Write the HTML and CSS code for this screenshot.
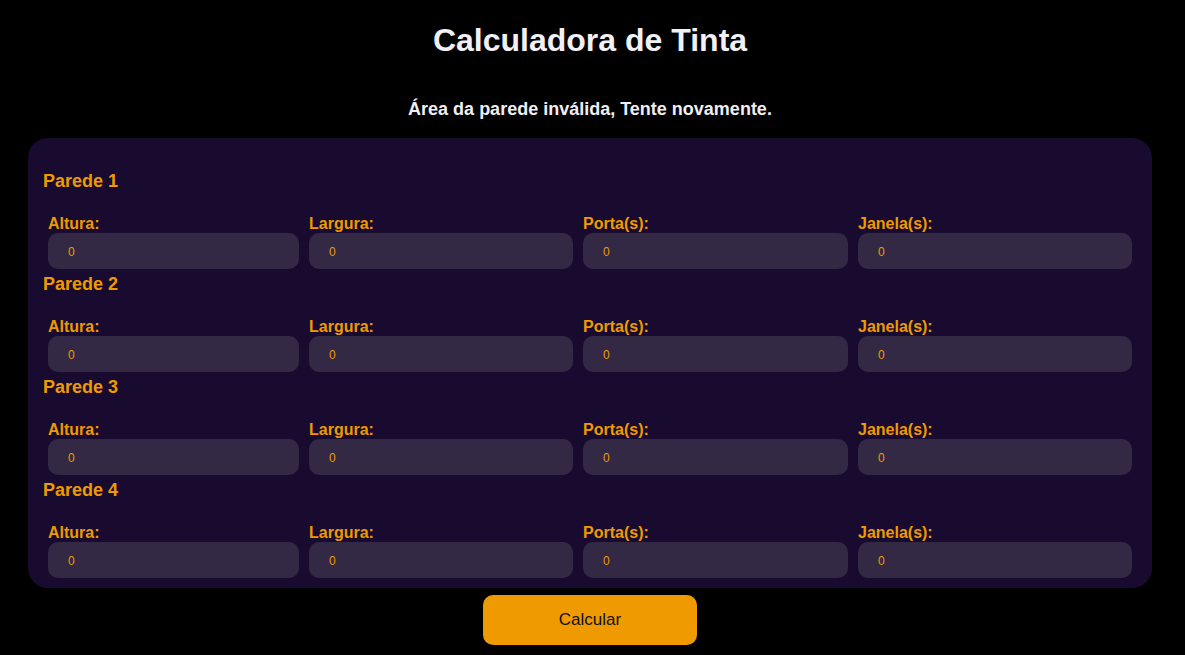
FILE: index.html
```html
<!DOCTYPE html>
<html lang="pt">
<head>
<meta charset="utf-8">
<title>Calculadora de Tinta</title>
<link rel="stylesheet" href="styles.css">
</head>
<body>
<div class="page">
  <h1 class="title">Calculadora de Tinta</h1>
  <p class="message">Área da parede inválida, Tente novamente.</p>
  <form class="panel">
    <div class="wall">
      <h3 class="wall-title">Parede 1</h3>
      <div class="fields">
        <label class="field"><span class="label">Altura:</span><input class="input" type="text" value="0"></label>
        <label class="field"><span class="label">Largura:</span><input class="input" type="text" value="0"></label>
        <label class="field"><span class="label">Porta(s):</span><input class="input" type="text" value="0"></label>
        <label class="field"><span class="label">Janela(s):</span><input class="input" type="text" value="0"></label>
      </div>
    </div>
    <div class="wall">
      <h3 class="wall-title">Parede 2</h3>
      <div class="fields">
        <label class="field"><span class="label">Altura:</span><input class="input" type="text" value="0"></label>
        <label class="field"><span class="label">Largura:</span><input class="input" type="text" value="0"></label>
        <label class="field"><span class="label">Porta(s):</span><input class="input" type="text" value="0"></label>
        <label class="field"><span class="label">Janela(s):</span><input class="input" type="text" value="0"></label>
      </div>
    </div>
    <div class="wall">
      <h3 class="wall-title">Parede 3</h3>
      <div class="fields">
        <label class="field"><span class="label">Altura:</span><input class="input" type="text" value="0"></label>
        <label class="field"><span class="label">Largura:</span><input class="input" type="text" value="0"></label>
        <label class="field"><span class="label">Porta(s):</span><input class="input" type="text" value="0"></label>
        <label class="field"><span class="label">Janela(s):</span><input class="input" type="text" value="0"></label>
      </div>
    </div>
    <div class="wall">
      <h3 class="wall-title">Parede 4</h3>
      <div class="fields">
        <label class="field"><span class="label">Altura:</span><input class="input" type="text" value="0"></label>
        <label class="field"><span class="label">Largura:</span><input class="input" type="text" value="0"></label>
        <label class="field"><span class="label">Porta(s):</span><input class="input" type="text" value="0"></label>
        <label class="field"><span class="label">Janela(s):</span><input class="input" type="text" value="0"></label>
      </div>
    </div>
  </form>
  <button class="button" type="button">Calcular</button>
</div>
</body>
</html>
```
FILE: styles.css
```css
html, body {
  margin: 0;
  padding: 0;
  background: #000;
}
body {
  font-family: "Liberation Sans", Arial, sans-serif;
  overflow: hidden;
}
.page {
  width: 1180px;
  display: flex;
  flex-direction: column;
  align-items: center;
}
.title {
  margin: 22px 0 0;
  font-size: 32px;
  line-height: 37px;
  font-weight: 700;
  color: #f2f0f4;
}
.message {
  margin: 40px 0 0;
  font-size: 18px;
  line-height: 21px;
  font-weight: 700;
  color: #f0eef4;
}
.panel {
  margin: 18px 0 0;
  width: 1124px;
  box-sizing: border-box;
  padding: 32px 20px 10px 15px;
  background: #190b2f;
  border-radius: 20px;
  display: flex;
  flex-direction: column;
  gap: 4px;
}
.wall-title {
  margin: 0 0 23px;
  font-size: 18px;
  line-height: 22px;
  font-weight: 700;
  color: #ee9a00;
}
.fields {
  margin-left: 5px;
  display: grid;
  grid-template-columns: 251px 264px 265px 274px;
  column-gap: 10px;
}
.field {
  display: flex;
  flex-direction: column;
}
.label {
  font-size: 16px;
  line-height: 18px;
  font-weight: 700;
  color: #ee9a00;
}
.input {
  box-sizing: border-box;
  width: 100%;
  height: 36px;
  margin: 0;
  padding: 2px 0 0 20px;
  border: none;
  outline: none;
  border-radius: 10px;
  background: #332945;
  color: #ee9a00;
  font-family: "Liberation Sans", Arial, sans-serif;
  font-size: 12px;
}
.button {
  margin: 7px 0 0;
  width: 214px;
  height: 50px;
  border: none;
  border-radius: 10px;
  background: #ee9a00;
  color: #111;
  font-family: "Liberation Sans", Arial, sans-serif;
  font-size: 17px;
  cursor: pointer;
}
```
